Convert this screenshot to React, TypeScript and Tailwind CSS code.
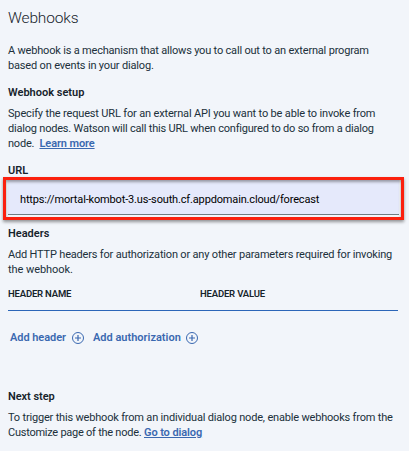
import type { ReactNode } from 'react';

function Line({ className = '', children }: { className?: string; children: ReactNode }) {
  return <span className={`block whitespace-pre ${className}`}>{children}</span>;
}

function AddIcon() {
  return (
    <svg className="h-3 w-3 shrink-0" viewBox="0 0 12 12" fill="none" stroke="currentColor" aria-hidden="true">
      <circle cx="6" cy="6" r="5.5" strokeWidth="1" />
      <path d="M6 3v6M3 6h6" strokeWidth="1.2" />
    </svg>
  );
}

export default function App() {
  return (
    <main className="h-[451px] w-[409px] overflow-hidden bg-[#f2f5fa] pt-2 pl-2 font-['Roboto','Liberation_Sans',sans-serif] text-[11px] leading-[15px] text-[#20303a]">
      <h1 className="h-5 text-[15.5px] leading-5 font-light tracking-[-0.15px] text-[#16232b]">Webhooks</h1>

      <p className="mt-[15px]">
        <Line className="tracking-[-0.19px]">A webhook is a mechanism that allows you to call out to an external program</Line>
        <Line className="tracking-[-0.17px]">based on events in your dialog.</Line>
      </p>

      <h2 className="mt-3 font-semibold text-[#16232b]">Webhook setup</h2>
      <p className="mt-1.5">
        <Line className="tracking-[-0.16px]">Specify the request URL for an external API you want to be able to invoke from</Line>
        <Line className="tracking-[-0.205px]">dialog nodes. Watson will call this URL when configured to do so from a dialog</Line>
        <span className="flex">
          <span className="w-[31.5px] tracking-[-0.2px]">node.</span>
          <a className="font-semibold tracking-[-0.11px] text-[#3a68b0] underline underline-offset-1">Learn more</a>
        </span>
      </p>

      <label className="mt-3 block font-semibold text-[#16232b]">URL</label>
      <div className="relative h-[37px] w-[391px] border-b border-[#6f7c83] bg-[#e5e9fb] pt-3.5 pl-3 text-black">
        <Line className="tracking-[-0.155px]">https://mortal-kombot-3.us-south.cf.appdomain.cloud/forecast</Line>
        <div className="absolute -top-px -left-[5px] h-[43px] w-[401px] border-3 border-[#fb200e] shadow-[0_2px_3px_rgba(0,0,0,0.4),inset_0_2px_3px_rgba(0,0,0,0.35)]" />
      </div>

      <h2 className="mt-[11px] font-semibold text-[#16232b]">Headers</h2>
      <p className="mt-1.5">
        <Line className="tracking-[-0.18px]">Add HTTP headers for authorization or any other parameters required for invoking</Line>
        <Line className="tracking-[-0.07px]">the webhook.</Line>
      </p>

      <div className="mt-[9px] flex h-[25px] w-[390px] border-b border-[#2c66b8] text-[9.5px] font-semibold text-[#16232b]">
        <span className="w-48 tracking-[-0.18px]">HEADER NAME</span>
        <span className="tracking-[-0.17px]">HEADER VALUE</span>
      </div>

      <div className="mt-[19px] flex items-center pl-0.5 font-semibold text-[#3a68b0]">
        <button className="flex w-[83px] items-center justify-between pr-[9px] tracking-[-0.05px]">
          Add header
          <AddIcon />
        </button>
        <button className="flex w-[105px] items-center justify-between">
          Add authorization
          <AddIcon />
        </button>
      </div>

      <h2 className="mt-11 font-semibold tracking-[-0.05px] text-[#16232b]">Next step</h2>
      <p className="mt-1.5">
        <Line className="tracking-[-0.185px]">To trigger this webhook from an individual dialog node, enable webhooks from the</Line>
        <span className="flex">
          <span className="w-34 tracking-[-0.25px]">Customize page of the node.</span>
          <a className="font-semibold tracking-[-0.1px] text-[#3a68b0] underline underline-offset-1">Go to dialog</a>
        </span>
      </p>
    </main>
  );
}
